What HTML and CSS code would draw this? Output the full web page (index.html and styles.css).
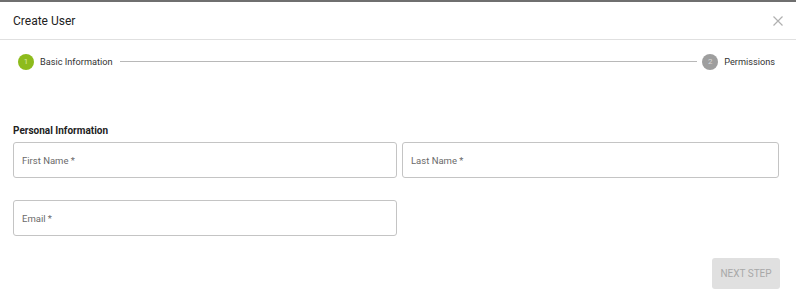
FILE: index.html
```html
<!DOCTYPE html>
<html>
<head>
    <title>Create User</title>
    <link rel="stylesheet" href="styles.css">
</head>
<body>
    <div class="dialog">
        <div class="dialog-header">
            <span class="dialog-title">Create User</span>
            <svg class="close" width="10" height="10" viewBox="0 0 10 10">
                <path d="M0.5 0.5 L9.5 9.5 M9.5 0.5 L0.5 9.5" stroke="#b0b0b0" stroke-width="1.2" fill="none"/>
            </svg>
        </div>
        <div class="stepper">
            <div class="step">
                <span class="step-num active">1</span>
                <span class="step-label">Basic Information</span>
            </div>
            <div class="step-line"></div>
            <div class="step">
                <span class="step-num">2</span>
                <span class="step-label">Permissions</span>
            </div>
        </div>
        <form class="user-form">
            <div class="section-title">Personal Information</div>
            <div class="row">
                <div class="field">First Name *</div>
                <div class="field">Last Name *</div>
            </div>
            <div class="row">
                <div class="field">Email *</div>
            </div>
            <div class="actions">
                <button type="button" class="next-btn" disabled>NEXT STEP</button>
            </div>
        </form>
    </div>
</body>
</html>
```

FILE: styles.css
```css
body {
    margin: 0;
    font-family: Roboto, "Liberation Sans", sans-serif;
    background: #fff;
}
.dialog {
    border-top: 2px solid #6f6f6f;
    width: 796px;
}
.dialog-header {
    display: flex;
    justify-content: space-between;
    align-items: center;
    height: 37px;
    padding: 0 13px;
    border-bottom: 1px solid #e0e0e0;
}
.dialog-title {
    font-size: 12px;
    color: #222;
}
.stepper {
    display: flex;
    align-items: center;
    padding: 13px 21px 0 18px;
    height: 17px;
}
.step {
    display: flex;
    align-items: center;
}
.step-num {
    width: 16px;
    height: 16px;
    border-radius: 50%;
    background: #9e9e9e;
    color: #d8d8d8;
    font-size: 8px;
    display: flex;
    align-items: center;
    justify-content: center;
    margin-right: 6px;
}
.step-num.active {
    background: #8dbb1c;
    color: #d9eaa8;
}
.step-label {
    font-size: 9.2px;
    color: #333;
}
.step-line {
    flex: 1;
    height: 1px;
    background: #b8b8b8;
    margin: 0 5px 0 7px;
}
.user-form {
    padding: 0 18px 0 13px;
    margin-top: 55px;
}
.section-title {
    font-size: 10px;
    font-weight: bold;
    color: #222;
    height: 12px;
    margin-bottom: 5px;
}
.row {
    display: grid;
    grid-template-columns: 384px 377px;
    gap: 5px;
    margin-bottom: 22px;
}
.field {
    height: 36px;
    box-sizing: border-box;
    border: 1px solid #c4c4c4;
    border-radius: 3px;
    font-size: 9.5px;
    color: #6a6a6a;
    display: flex;
    align-items: center;
    padding-left: 8px;
}
.actions {
    display: flex;
    justify-content: flex-end;
}
.next-btn {
    background: #e0e0e0;
    border: none;
    border-radius: 3px;
    color: #a8a8a8;
    font-family: Roboto, "Liberation Sans", sans-serif;
    font-size: 10px;
    width: 68px;
    height: 31px;
    margin-right: -2px;
}
```
